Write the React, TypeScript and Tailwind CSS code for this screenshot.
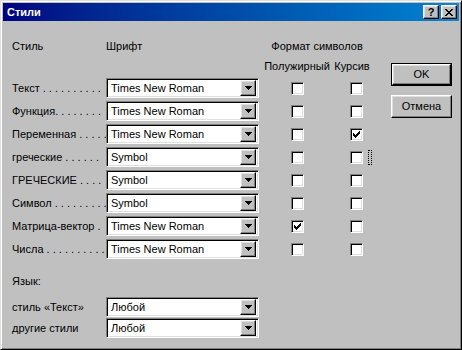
import React from 'react';

// Win98-style bevels
const sunken =
  'border border-t-[#808080] border-l-[#808080] border-b-white border-r-white shadow-[inset_1px_1px_0_#000,inset_-1px_-1px_0_#dfdfdf]';
const raised =
  'border border-t-white border-l-white border-b-black border-r-black shadow-[inset_-1px_-1px_0_#808080,inset_1px_1px_0_#dfdfdf]';

const rows = [
  { label: 'Текст . . . . . . . . . .', font: 'Times New Roman', bold: false, italic: false },
  { label: 'Функция. . . . . . . .', font: 'Times New Roman', bold: false, italic: false },
  { label: 'Переменная . . . . .', font: 'Times New Roman', bold: false, italic: true },
  { label: 'греческие . . . . . .', font: 'Symbol', bold: false, italic: false, focus: true },
  { label: 'ГРЕЧЕСКИЕ . . . .', font: 'Symbol', bold: false, italic: false },
  { label: 'Символ . . . . . . . . .', font: 'Symbol', bold: false, italic: false },
  { label: 'Матрица-вектор .', font: 'Times New Roman', bold: true, italic: false },
  { label: 'Числа . . . . . . . . . .', font: 'Times New Roman', bold: false, italic: false },
];

const Combo = ({ value }: { value: string }) => (
  <div className={`flex h-[20px] w-[153px] items-center bg-white p-[2px] ${sunken}`}>
    <span className="flex-1 whitespace-nowrap pl-[2px]">{value}</span>
    <div className={`flex h-[16px] w-[16px] items-center justify-center bg-[#c0c0c0] ${raised}`}>
      <svg width="7" height="4" shapeRendering="crispEdges">
        <rect x="0" y="0" width="7" height="1" />
        <rect x="1" y="1" width="5" height="1" />
        <rect x="2" y="2" width="3" height="1" />
        <rect x="3" y="3" width="1" height="1" />
      </svg>
    </div>
  </div>
);

const Check = ({ checked, className }: { checked: boolean; className: string }) => (
  <div className={`flex h-[13px] w-[13px] items-center justify-center bg-white ${sunken} ${className}`}>
    {checked && (
      <svg width="7" height="7" shapeRendering="crispEdges">
        <rect x="6" y="0" width="1" height="1" />
        <rect x="5" y="1" width="2" height="1" />
        <rect x="0" y="2" width="1" height="1" />
        <rect x="4" y="2" width="3" height="1" />
        <rect x="0" y="3" width="2" height="1" />
        <rect x="3" y="3" width="3" height="1" />
        <rect x="0" y="4" width="5" height="1" />
        <rect x="1" y="5" width="3" height="1" />
        <rect x="2" y="6" width="1" height="1" />
      </svg>
    )}
  </div>
);

const App = () => {
  return (
    <div className="flex h-[350px] w-[462px] flex-col border border-t-[#dfdfdf] border-l-[#dfdfdf] border-b-black border-r-black bg-[#c0c0c0] p-[2px] font-['Liberation_Sans',Arial,sans-serif] text-[11px] leading-[13px] text-black shadow-[inset_1px_1px_0_#fff,inset_-1px_-1px_0_#808080]">
      {/* Title bar */}
      <div className="flex h-[18px] items-center bg-linear-to-r from-[#000080] to-[#1084d0] pl-[4px] pr-[2px]">
        <span className="font-bold text-white">Стили</span>
        <div className="ml-auto flex gap-[2px]">
          <div className={`flex h-[14px] w-[16px] items-center justify-center bg-[#c0c0c0] text-[11px] font-bold leading-none ${raised}`}>
            ?
          </div>
          <div className={`flex h-[14px] w-[16px] items-center justify-center bg-[#c0c0c0] ${raised}`}>
            <svg width="8" height="7" shapeRendering="crispEdges">
              <path d="M0 0h2v1h-2zM6 0h2v1h-2zM1 1h2v1h-2zM5 1h2v1h-2zM2 2h4v1h-4zM3 3h2v1h-2zM2 4h4v1h-4zM1 5h2v1h-2zM5 5h2v1h-2zM0 6h2v1h-2zM6 6h2v1h-2z" />
            </svg>
          </div>
        </div>
      </div>

      <div className="flex flex-1">
        {/* Left part: styles table */}
        <div className="flex flex-col pl-[9px]">
          <div className="mt-[19px] flex h-[13px]">
            <span className="w-[94px]">Стиль</span>
            <span className="w-[156px]">Шрифт</span>
            <span className="w-[110px] text-center">Формат символов</span>
          </div>
          <div className="mt-[7px] flex h-[13px] pl-[250px]">
            <span className="w-[70px] text-center">Полужирный</span>
            <span className="w-[40px] text-center">Курсив</span>
          </div>

          <div className="mt-[5px] flex flex-col gap-[3px]">
            {rows.map((r) => (
              <div key={r.label} className="flex h-[20px] items-center">
                <span className="w-[94px] whitespace-nowrap">{r.label}</span>
                <Combo value={r.font} />
                <Check checked={r.bold} className="ml-[32px]" />
                <Check checked={r.italic} className="ml-[46px]" />
                {r.focus && <div className="ml-[5px] h-[15px] w-[4px] border border-dotted border-black" />}
              </div>
            ))}
          </div>

          {/* Language */}
          <div className="mt-[16px] h-[13px]">Язык:</div>
          <div className="mt-[9px] flex flex-col gap-[1px]">
            <div className="flex h-[20px] items-center">
              <span className="w-[94px] whitespace-nowrap">стиль «Текст»</span>
              <Combo value="Любой" />
            </div>
            <div className="flex h-[20px] items-center">
              <span className="w-[94px] whitespace-nowrap">другие стили</span>
              <Combo value="Любой" />
            </div>
          </div>
        </div>

        {/* Right part: buttons */}
        <div className="ml-auto flex flex-col gap-[9px] pr-[7px] pt-[42px]">
          <div className="h-[23px] w-[61px] border border-black">
            <div className={`flex h-full w-full items-center justify-center bg-[#c0c0c0] ${raised}`}>OK</div>
          </div>
          <div className={`flex h-[23px] w-[61px] items-center justify-center bg-[#c0c0c0] ${raised}`}>
            Отмена
          </div>
        </div>
      </div>
    </div>
  );
};

export default App;
